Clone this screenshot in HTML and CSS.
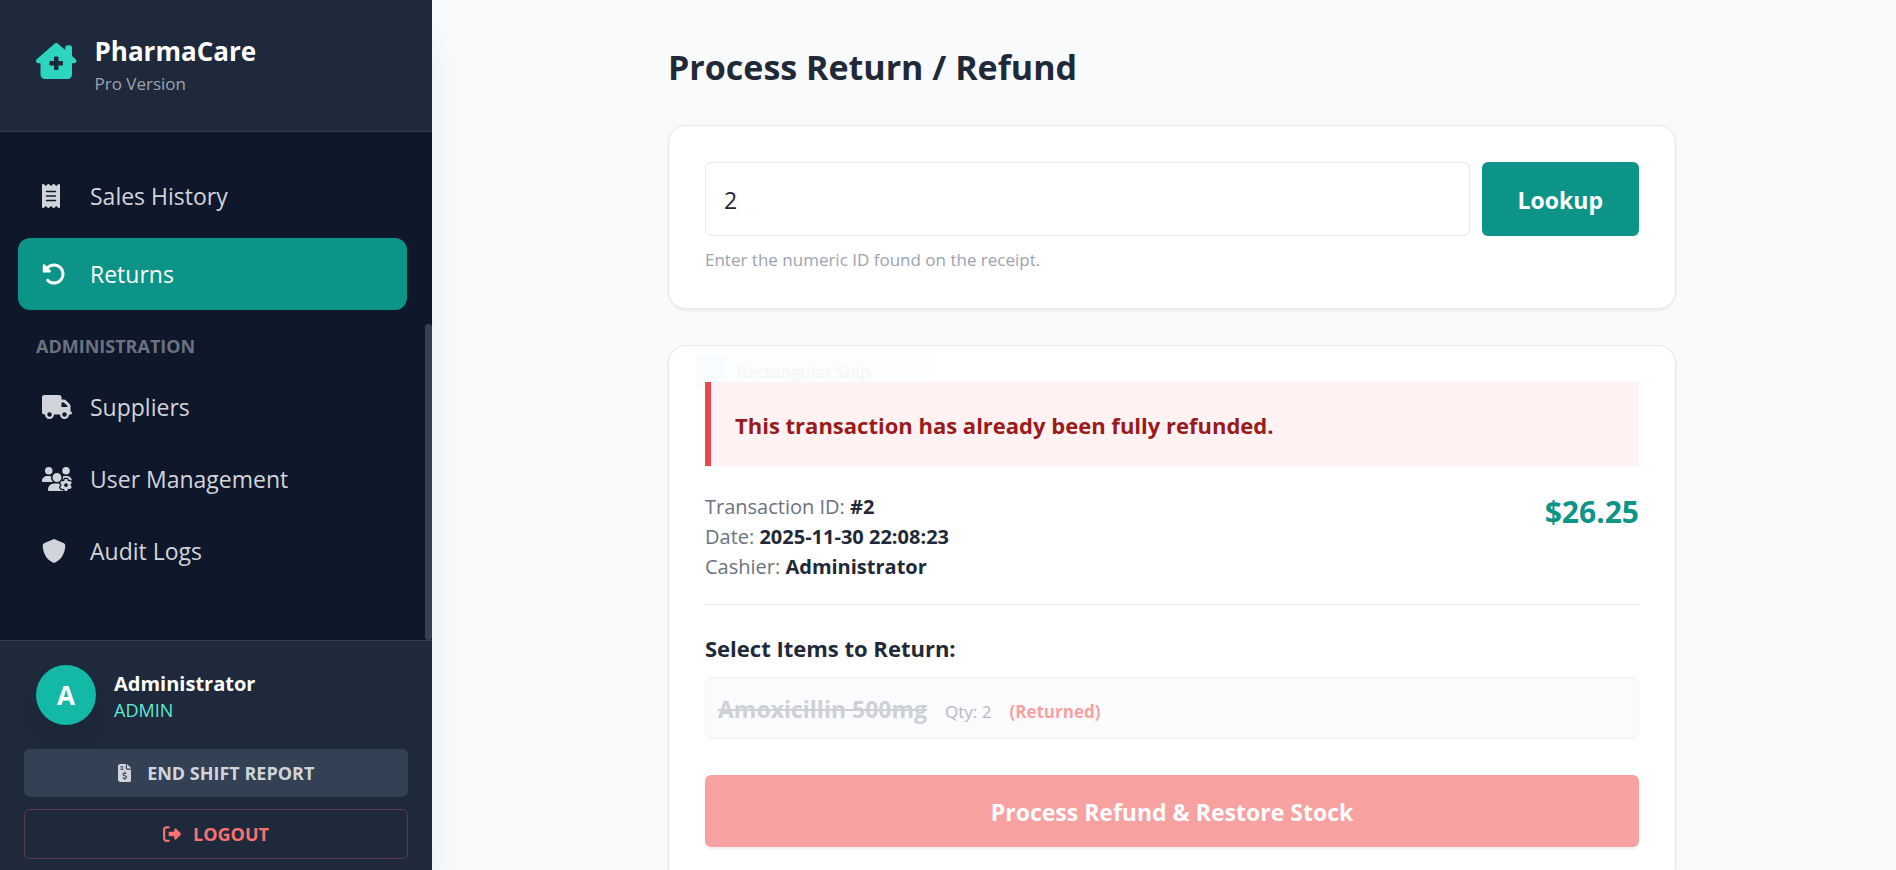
FILE: index.html
```html
<!DOCTYPE html>
<html lang="en">
<head>
<meta charset="utf-8">
<meta name="viewport" content="width=device-width, initial-scale=1">
<title>PharmaCare - Process Return / Refund</title>
<link rel="stylesheet" href="styles.css">
</head>
<body>
<div class="app">
  <aside class="sidebar">
    <header class="brand">
      <svg class="brand-icon" viewBox="0 0 576 512" aria-hidden="true"><path d="M543.8 287.6c17 0 32-14 32-32.1c1-9-3-17-11-24L512 185V64c0-17.7-14.3-32-32-32H448c-17.7 0-32 14.3-32 32v36.7L309.5 7c-6-5-14-7-21-7s-15 1-22 8L10 231.5c-7 7-10 15-10 24c0 18 14 32.1 32 32.1h32V448c0 35.3 28.7 64 64 64H448.5c35.5 0 64.2-28.8 64-64.3l-.7-160.2h32zM256 208c0-8.8 7.2-16 16-16h32c8.8 0 16 7.2 16 16v48h48c8.8 0 16 7.2 16 16v32c0 8.8-7.2 16-16 16H320v48c0 8.8-7.2 16-16 16H272c-8.8 0-16-7.2-16-16V320H208c-8.8 0-16-7.2-16-16V272c0-8.8 7.2-16 16-16h48V208z"/></svg>
      <div class="brand-text">
        <div class="brand-name">PharmaCare</div>
        <div class="brand-sub">Pro Version</div>
      </div>
    </header>

    <div class="nav-wrap">
      <nav class="nav">
        <a class="nav-item" href="#sales">
          <span class="nav-icon"><svg viewBox="0 0 384 512" aria-hidden="true"><path d="M14 2.2C22.5-1.7 32.5-.3 39.6 5.8L80 40.4 120.4 5.8c9-7.7 22.3-7.7 31.2 0L192 40.4 232.4 5.8c9-7.7 22.3-7.7 31.2 0L304 40.4 344.4 5.8c7.1-6.1 17.1-7.5 25.6-3.6s14 12.4 14 21.8V488c0 9.4-5.5 17.9-14 21.8s-18.5 2.5-25.6-3.6L304 471.6l-40.4 34.6c-9 7.7-22.3 7.7-31.2 0L192 471.6l-40.4 34.6c-9 7.7-22.3 7.7-31.2 0L80 471.6 39.6 506.2c-7.1 6.1-17.1 7.5-25.6 3.6S0 497.4 0 488V24C0 14.6 5.5 6.1 14 2.2zM96 144c-8.8 0-16 7.2-16 16s7.2 16 16 16H288c8.8 0 16-7.2 16-16s-7.2-16-16-16H96zM80 352c0 8.8 7.2 16 16 16H288c8.8 0 16-7.2 16-16s-7.2-16-16-16H96c-8.8 0-16 7.2-16 16zM96 240c-8.8 0-16 7.2-16 16s7.2 16 16 16H288c8.8 0 16-7.2 16-16s-7.2-16-16-16H96z"/></svg></span>
          Sales History
        </a>
        <a class="nav-item active" href="#returns" aria-current="page">
          <span class="nav-icon"><svg viewBox="0 0 512 512" aria-hidden="true"><path d="M48.5 224H40c-13.3 0-24-10.7-24-24V72c0-9.7 5.8-18.5 14.8-22.2s19.3-1.7 26.2 5.2L98.6 96.6c87.6-86.5 228.7-86.2 315.8 1c87.5 87.5 87.5 229.3 0 316.8s-229.3 87.5-316.8 0c-12.5-12.5-12.5-32.8 0-45.3s32.8-12.5 45.3 0c62.5 62.5 163.8 62.5 226.3 0s62.5-163.8 0-226.3c-62.2-62.2-162.7-62.5-225.3-1L185 183c6.9 6.9 8.9 17.2 5.2 26.2s-12.5 14.8-22.2 14.8H48.5z"/></svg></span>
          Returns
        </a>
      </nav>
      <h2 class="nav-heading">ADMINISTRATION</h2>
      <nav class="nav" aria-label="Administration">
        <a class="nav-item" href="#suppliers">
          <span class="nav-icon"><svg viewBox="0 0 640 512" aria-hidden="true"><path d="M48 0C21.5 0 0 21.5 0 48V368c0 26.5 21.5 48 48 48H64c0 53 43 96 96 96s96-43 96-96H384c0 53 43 96 96 96s96-43 96-96h32c17.7 0 32-14.3 32-32s-14.3-32-32-32V288 256 237.3c0-17-6.7-33.3-18.7-45.3L512 114.7c-12-12-28.3-18.7-45.3-18.7H416V48c0-26.5-21.5-48-48-48H48zM416 160h50.7L544 237.3V256H416V160zM112 416a48 48 0 1 1 96 0 48 48 0 1 1 -96 0zm368-48a48 48 0 1 1 0 96 48 48 0 1 1 0-96z"/></svg></span>
          Suppliers
        </a>
        <a class="nav-item" href="#users">
          <span class="nav-icon"><svg viewBox="0 0 640 512" aria-hidden="true"><path d="M144 160A80 80 0 1 0 144 0a80 80 0 1 0 0 160zm368 0A80 80 0 1 0 512 0a80 80 0 1 0 0 160zM0 298.7C0 310.4 9.6 320 21.3 320H234.7c.2 0 .4 0 .7 0c-26.6-23.5-43.3-57.8-43.3-96c0-7.6 .7-15 1.9-22.3c-13.6-6.3-28.7-9.7-44.6-9.7H106.7C47.8 192 0 239.8 0 298.7zM320 320c24 0 45.9-8.8 62.7-23.3c2.5-3.7 5.2-7.3 8-10.7c2.7-3.3 5.7-6.1 9-8.3C410 262.3 416 243.9 416 224c0-53-43-96-96-96s-96 43-96 96s43 96 96 96zm65.4 60.2c-10.3-5.9-18.1-16.2-20.8-28.2H261.3C187.7 352 128 411.7 128 485.3c0 14.7 11.9 26.7 26.7 26.7H455.2c-2.1-5.2-3.2-10.9-3.2-16.4v-3c-1.3-.7-2.7-1.5-4-2.3l-2.6 1.5c-16.8 9.7-40.5 8-54.7-9.7c-4.5-5.6-8.6-11.5-12.4-17.6l-.1-.2-.1-.2-2.4-4.1-.1-.2-.1-.2c-3.4-6.2-6.4-12.6-9-19.3c-8.2-21.2 2.2-42.6 19-52.3l2.7-1.5c0-.8 0-1.5 0-2.3s0-1.5 0-2.3l-2.7-1.5zM533.3 192H490.7c-15.9 0-31 3.5-44.6 9.7c1.3 7.2 1.9 14.7 1.9 22.3c0 17.4-3.5 33.9-9.7 49c2.5 .9 4.9 2 7.1 3.3l2.6 1.5c1.3-.8 2.6-1.6 4-2.3v-3c0-19.4 13.3-39.1 35.8-42.6c7.9-1.2 16-1.9 24.2-1.9s16.3 .6 24.2 1.9c22.5 3.5 35.8 23.2 35.8 42.6v3c1.3 .7 2.7 1.5 4 2.3l2.6-1.5c16.8-9.7 40.5-8 54.7 9.7c2.3 2.8 4.5 5.8 6.6 8.7c-2.1-57.1-49-102.7-106.6-102.7zm91.3 163.9c6.3-3.6 9.5-11.1 6.8-18c-2.1-5.5-4.6-10.8-7.4-15.9l-2.3-4c-3.1-5.1-6.5-9.9-10.2-14.5c-4.6-5.7-12.7-6.7-19-3l-2.9 1.7c-9.2 5.3-20.4 4-29.6-1.3s-16.1-14.5-16.1-25.1v-3.4c0-7.3-4.9-13.8-12.1-14.9c-6.5-1-13.1-1.5-19.9-1.5s-13.4 .5-19.9 1.5c-7.2 1.1-12.1 7.6-12.1 14.9v3.4c0 10.6-6.9 19.8-16.1 25.1s-20.4 6.6-29.6 1.3l-2.9-1.7c-6.3-3.6-14.4-2.6-19 3c-3.7 4.6-7.1 9.5-10.2 14.6l-2.3 3.9c-2.8 5.1-5.3 10.4-7.4 15.9c-2.6 6.8 .5 14.3 6.8 17.9l2.9 1.7c9.2 5.3 13.7 15.8 13.7 26.4s-4.5 21.1-13.7 26.4l-3 1.7c-6.3 3.6-9.5 11.1-6.8 17.9c2.1 5.5 4.6 10.7 7.4 15.8l2.4 4.1c3 5.1 6.4 9.9 10.1 14.5c4.6 5.7 12.7 6.7 19 3l2.9-1.7c9.2-5.3 20.4-4 29.6 1.3s16.1 14.5 16.1 25.1v3.4c0 7.3 4.9 13.8 12.1 14.9c6.5 1 13.1 1.5 19.9 1.5s13.4-.5 19.9-1.5c7.2-1.1 12.1-7.6 12.1-14.9V492c0-10.6 6.9-19.8 16.1-25.1s20.4-6.6 29.6-1.3l2.9 1.7c6.3 3.6 14.4 2.6 19-3c3.7-4.6 7.1-9.4 10.1-14.5l2.4-4.2c2.8-5.1 5.3-10.3 7.4-15.8c2.6-6.8-.5-14.3-6.8-17.9l-3-1.7c-9.2-5.3-13.7-15.8-13.7-26.4s4.5-21.1 13.7-26.4l3-1.7zM472 384a40 40 0 1 1 80 0 40 40 0 1 1 -80 0z"/></svg></span>
          User Management
        </a>
        <a class="nav-item" href="#audit">
          <span class="nav-icon"><svg viewBox="0 0 512 512" aria-hidden="true"><path d="M269.4 2.9C265.2 1 260.7 0 256 0s-9.2 1-13.4 2.9L54.3 82.8c-22 9.3-38.4 31-38.3 57.2c.5 99.2 41.3 280.7 213.6 363.2c16.7 8 36.1 8 52.8 0C454.7 420.7 495.5 239.2 496 140c.1-26.2-16.3-47.9-38.3-57.2L269.4 2.9z"/></svg></span>
          Audit Logs
        </a>
      </nav>
      <span class="scroll-thumb"></span>
    </div>

    <footer class="account">
      <div class="user">
        <span class="avatar">A</span>
        <div class="user-text">
          <div class="user-name">Administrator</div>
          <div class="user-role">ADMIN</div>
        </div>
      </div>
      <button class="side-btn report" type="button">
        <svg viewBox="0 0 384 512" aria-hidden="true"><path d="M64 0C28.7 0 0 28.7 0 64V448c0 35.3 28.7 64 64 64H320c35.3 0 64-28.7 64-64V160H256c-17.7 0-32-14.3-32-32V0H64zM256 0V128H384L256 0zM64 80c0-8.8 7.2-16 16-16h64c8.8 0 16 7.2 16 16s-7.2 16-16 16H80c-8.8 0-16-7.2-16-16zm0 64c0-8.8 7.2-16 16-16h64c8.8 0 16 7.2 16 16s-7.2 16-16 16H80c-8.8 0-16-7.2-16-16zm128 72c8.8 0 16 7.2 16 16v17.3c8.5 1.2 16.7 3.1 24.1 5.1c8.5 2.3 13.6 11 11.3 19.6s-11 13.6-19.6 11.3c-11.1-3-22-5.2-32.1-5.3c-8.4-.1-17.4 1.8-23.6 5.5c-5.7 3.4-8.1 7.3-8.1 12.8c0 3.7 1.3 6.5 7.3 10.1c6.9 4.1 16.6 7.1 29.2 10.9l.5 .1c11.3 3.4 25.3 7.6 36.3 14.6c12.1 7.6 22.4 19.7 22.7 38.2c.3 19.3-9.6 33.3-22.9 41.6c-7.7 4.8-16.4 7.6-25.1 9.1V440c0 8.8-7.2 16-16 16s-16-7.2-16-16V422.2c-11.2-2.1-21.7-5.7-30.9-8.9c-2.1-.7-4.2-1.4-6.2-2.1c-8.4-2.8-12.9-11.9-10.1-20.2s11.9-12.9 20.2-10.1c2.5 .8 4.8 1.6 7.1 2.4c13.6 4.6 24.6 8.4 36.3 8.7c9.1 .3 17.9-1.7 23.7-5.3c5.1-3.2 7.9-7.3 7.8-14c-.1-4.6-1.8-7.8-7.7-11.6c-6.8-4.3-16.5-7.4-29-11.2l-1.6-.5c-11-3.3-24.3-7.3-34.8-13.7c-12-7.2-22.6-18.9-22.7-37.3c-.1-19.4 10.8-32.8 23.8-40.5c7.5-4.4 15.8-7.2 24.1-8.7V232c0-8.8 7.2-16 16-16z"/></svg>
        END SHIFT REPORT
      </button>
      <button class="side-btn logout" type="button">
        <svg viewBox="0 0 512 512" aria-hidden="true"><path d="M377.9 105.9L500.7 228.7c7.2 7.2 11.3 17.1 11.3 27.3s-4.1 20.1-11.3 27.3L377.9 406.1c-6.4 6.4-15 9.9-24 9.9c-18.7 0-33.9-15.2-33.9-33.9l0-62.1-128 0c-17.7 0-32-14.3-32-32l0-64c0-17.7 14.3-32 32-32l128 0 0-62.1c0-18.7 15.2-33.9 33.9-33.9c9 0 17.6 3.6 24 9.9zM160 96L96 96c-17.7 0-32 14.3-32 32l0 256c0 17.7 14.3 32 32 32l64 0c17.7 0 32 14.3 32 32s-14.3 32-32 32l-64 0c-53 0-96-43-96-96L0 128C0 75 43 32 96 32l64 0c17.7 0 32 14.3 32 32s-14.3 32-32 32z"/></svg>
        LOGOUT
      </button>
    </footer>
  </aside>

  <main class="main">
    <div class="content">
      <h1 class="page-title">Process Return / Refund</h1>

      <section class="card">
        <form class="lookup">
          <input class="lookup-input" id="sale-id" type="text" inputmode="numeric" value="2" aria-label="Transaction ID" aria-describedby="sale-hint">
          <button class="lookup-btn" type="button">Lookup</button>
        </form>
        <p class="hint" id="sale-hint">Enter the numeric ID found on the receipt.</p>
      </section>

      <section class="card">
        <div class="ghost"><span class="ghost-icon"></span>Rectangular Snip</div>
        <div class="alert" role="alert">This transaction has already been fully refunded.</div>
        <div class="summary">
          <div class="details">
            <div>Transaction ID: <strong>#2</strong></div>
            <div>Date: <strong>2025-11-30 22:08:23</strong></div>
            <div>Cashier: <strong>Administrator</strong></div>
          </div>
          <div class="total">$26.25</div>
        </div>
        <h2 class="items-title">Select Items to Return:</h2>
        <div class="item">
          <span class="item-name">Amoxicillin 500mg</span>
          <span class="item-qty">Qty: 2</span>
          <span class="item-state">(Returned)</span>
        </div>
        <button class="refund-btn" type="button" disabled>Process Refund &amp; Restore Stock</button>
      </section>
    </div>
  </main>
</div>
</body>
</html>
```

FILE: styles.css
```css
*,
*::before,
*::after {
  box-sizing: border-box;
}

body {
  margin: 0;
  font-family: "Open Sans", "Noto Sans", sans-serif;
  font-size: 23px;
  line-height: 36px;
  color: #1f2937;
  background: #f8fafc;
}

h1,
h2,
p {
  margin: 0;
}

button,
input {
  font: inherit;
}

svg {
  display: block;
  fill: currentColor;
}

.app {
  display: flex;
  height: 100vh;
  overflow: hidden;
}

/* Sidebar */
.sidebar {
  display: flex;
  flex: none;
  flex-direction: column;
  width: 432px;
  color: #fff;
  background: #0f172a;
  box-shadow: 0 30px 38px -8px rgba(0, 0, 0, 0.1);
}

.brand {
  display: flex;
  align-items: flex-start;
  gap: 18px;
  padding: 30px 36px;
  height: 132px;
  background: #1e293b;
  border-bottom: 1px solid #334155;
}

.brand-icon {
  height: 36px;
  margin-top: 13px;
  color: #2dd4bf;
}

.brand-name {
  font-size: 26px;
  font-weight: 700;
  line-height: 42px;
}

.brand-sub {
  font-size: 17px;
  line-height: 24px;
  color: #9ca3af;
}

.nav-wrap {
  position: relative;
  flex: 1;
  padding: 28px 25px 0 18px;
}

.nav {
  display: flex;
  flex-direction: column;
}

.nav-item {
  display: flex;
  align-items: center;
  height: 72px;
  padding: 0 24px;
  border-radius: 12px;
  color: #d1d5db;
  text-decoration: none;
}

.nav-item.active {
  margin-top: 6px;
  color: #fff;
  background: #0d9488;
}

.nav-icon {
  flex: none;
  width: 48px;
}

.nav-icon svg {
  height: 24px;
}

.nav-heading {
  padding: 24px 18px 12px;
  font-size: 18px;
  font-weight: 700;
  line-height: 25px;
  color: #6b7280;
}

.scroll-thumb {
  position: absolute;
  right: 0;
  bottom: 0;
  width: 7px;
  height: 316px;
  border-radius: 4px;
  background: #334155;
}

.account {
  display: flex;
  flex-direction: column;
  gap: 12px;
  padding: 24px 24px 11px;
  background: #1e293b;
  border-top: 1px solid #334155;
}

.user {
  display: flex;
  align-items: center;
  gap: 18px;
  padding: 0 12px 12px;
}

.avatar {
  display: grid;
  place-items: center;
  width: 60px;
  height: 60px;
  border-radius: 50%;
  font-size: 26px;
  font-weight: 700;
  background: #14b8a6;
  box-shadow: 0 15px 22px -4px rgba(0, 0, 0, 0.1);
}

.user-text {
  padding-top: 2px;
}

.user-name {
  font-size: 20px;
  font-weight: 700;
  line-height: 28px;
}

.user-role {
  font-size: 18px;
  line-height: 24px;
  color: #5eead4;
}

.side-btn {
  display: flex;
  align-items: center;
  justify-content: center;
  gap: 12px;
  width: 100%;
  height: 48px;
  border: 0;
  border-radius: 6px;
  font-size: 18px;
  font-weight: 700;
  line-height: 24px;
}

.side-btn svg {
  height: 18px;
}

.report {
  gap: 16px;
  color: #d1d5db;
  background: #334155;
}

.logout {
  height: 50px;
  border: 1px solid #63384a;
  color: #f87171;
  background: transparent;
}

/* Main column */
.main {
  flex: 1;
  min-width: 0;
  padding: 46px 36px 36px 52px;
  overflow-y: auto;
  scrollbar-width: none;
}

.content {
  display: flex;
  flex-direction: column;
  gap: 36px;
  max-width: 1008px;
  margin: 0 auto;
}

.page-title {
  font-size: 34px;
  font-weight: 700;
  line-height: 43px;
}

.card {
  position: relative;
  padding: 36px;
  border: 1px solid #e5e7eb;
  border-radius: 18px;
  background: #fff;
  box-shadow: 0 2px 3px rgba(0, 0, 0, 0.05);
}

.lookup {
  display: flex;
  gap: 12px;
}

.lookup-input {
  flex: 1;
  min-width: 0;
  height: 74px;
  padding: 2px 18px 0;
  border: 1px solid #e5e7eb;
  border-radius: 6px;
  color: #1f2937;
  background: #fff;
}

.lookup-btn {
  padding: 2px 36px 0;
  border: 0;
  border-radius: 6px;
  font-weight: 700;
  color: #fff;
  background: #0d9488;
}

.hint {
  margin-top: 12px;
  font-size: 17px;
  line-height: 24px;
  color: #9ca3af;
}

.ghost {
  position: absolute;
  top: 8px;
  left: 27px;
  display: flex;
  align-items: center;
  gap: 12px;
  width: 236px;
  height: 36px;
  font-size: 17px;
  color: #f3f5f7;
  background: #fbfdfe;
}

.ghost-icon {
  width: 29px;
  height: 36px;
  background: #f8fcfe;
}

.alert {
  position: relative;
  padding: 25px 24px 23px;
  border-left: 6px solid #e5484d;
  font-size: 22px;
  font-weight: 700;
  color: #991b1b;
  background: #fef2f2;
}

.summary {
  display: flex;
  justify-content: space-between;
  margin-top: 24px;
  padding: 2px 0 22px;
  border-bottom: 1px solid #e5e7eb;
}

.details {
  font-size: 20px;
  line-height: 30px;
  color: #6b7280;
}

.details strong {
  color: #1f2937;
}

.total {
  font-size: 30px;
  font-weight: 700;
  line-height: 40px;
  color: #0d9488;
}

.items-title {
  margin-top: 25px;
  font-size: 22px;
  font-weight: 700;
}

.item {
  display: flex;
  align-items: baseline;
  gap: 18px;
  margin-top: 11px;
  padding: 13px 12px 11px;
  border: 1px solid #e5e7eb;
  border-radius: 6px;
  background: #f8f9fd;
  opacity: 0.5;
}

.item-name {
  font-weight: 700;
  text-decoration: line-through;
  color: #9ca3af;
}

.item-qty,
.item-state {
  font-size: 17px;
  line-height: 24px;
}

.item-qty {
  color: #6b7280;
}

.item-state {
  font-weight: 700;
  color: #ef4444;
}

.refund-btn {
  width: 100%;
  height: 72px;
  margin-top: 36px;
  padding: 2px 24px 0;
  border: 0;
  border-radius: 6px;
  font-weight: 700;
  color: #fff;
  background: #f8a1a1;
  box-shadow: 0 2px 3px rgba(0, 0, 0, 0.08);
}
```
